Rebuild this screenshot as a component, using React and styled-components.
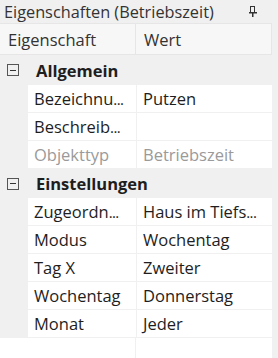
import styled, { createGlobalStyle } from "styled-components";

const Global = createGlobalStyle`
  body {
    margin: 0;
    font-family: "Open Sans", "Noto Sans", sans-serif;
    background: #f0f0f0;
  }
`;

const Panel = styled.div`
  width: 278px;
  height: 358px;
  display: flex;
  flex-direction: column;
  background: #f0f0f0;
  color: #1e1e1e;
  overflow: hidden;
`;

const TitleBar = styled.div`
  height: 23px;
  display: flex;
  align-items: center;
  justify-content: space-between;
  padding: 0 20px 0 4px;
  font-size: 16.3px;
  color: #333;
  white-space: nowrap;
`;

const Grid = styled.div`
  flex: 1;
  margin-right: 6px;
  background: #fff;
  display: flex;
  flex-direction: column;
`;

const HeaderRow = styled.div`
  display: grid;
  grid-template-columns: 136px 1fr;
  height: 32px;
  font-size: 16.5px;
`;

const HeaderCell = styled.div`
  display: flex;
  align-items: center;
  padding-left: 8px;
  background: #f7f7f7;
  border-top: 1px solid #e6e6e6;
  border-bottom: 1px solid #e6e6e6;
  border-right: 1px solid #e6e6e6;
  color: #333;
`;

const GroupRow = styled.div`
  height: ${(p) => p.$h}px;
  display: flex;
  align-items: center;
  background: #f0f0f0;
  font-size: 16.5px;
  font-weight: 700;
`;

const Toggle = styled.span`
  width: 10px;
  height: 10px;
  border: 1px solid #555;
  margin: 0 17px 0 7px;
  display: flex;
  align-items: center;
  justify-content: center;
  &::after {
    content: "";
    width: 6px;
    height: 1px;
    background: #333;
  }
`;

const Row = styled.div`
  display: grid;
  grid-template-columns: 28px 108px 1fr;
  height: 28px;
  font-size: 16.5px;
  color: ${(p) => (p.$readonly ? "#9a9a9a" : "#1e1e1e")};
`;

const Gutter = styled.div`
  background: #f0f0f0;
`;

const Cell = styled.div`
  display: flex;
  align-items: center;
  padding-left: 6px;
  white-space: nowrap;
  overflow: hidden;
  border-bottom: 1px solid #f0f0f0;
  border-left: ${(p) => (p.$value ? "1px solid #f0f0f0" : "none")};
`;

const Dots = styled.span`
  letter-spacing: -0.6px;
  font-size: 15px;
`;

const Filler = styled.div`
  flex: 1;
  display: grid;
  grid-template-columns: 136px 1fr;
  & > div:first-child {
    border-right: 1px solid #f0f0f0;
  }
`;

const Pin = () => (
  <svg width="10" height="12" viewBox="0 0 10 12">
    <rect x="2.5" y="0.5" width="4" height="6" fill="none" stroke="#333" />
    <rect x="1" y="6" width="8" height="1.5" fill="#333" />
    <rect x="4" y="7" width="1.5" height="4" fill="#333" />
  </svg>
);

const Text = ({ t }) =>
  t.endsWith("...") ? (
    <>
      {t.slice(0, -3)}
      <Dots>...</Dots>
    </>
  ) : (
    t
  );

const groups = [
  {
    name: "Allgemein",
    h: 30,
    rows: [
      ["Bezeichnu...", "Putzen"],
      ["Beschreib...", ""],
      ["Objekttyp", "Betriebszeit", true],
    ],
  },
  {
    name: "Einstellungen",
    h: 29,
    rows: [
      ["Zugeordn...", "Haus im Tiefs..."],
      ["Modus", "Wochentag"],
      ["Tag X", "Zweiter"],
      ["Wochentag", "Donnerstag"],
      ["Monat", "Jeder"],
    ],
  },
];

export default function App() {
  return (
    <Panel>
      <Global />
      <TitleBar>
        <span>Eigenschaften (Betriebszeit)</span>
        <Pin />
      </TitleBar>
      <Grid>
        <HeaderRow>
          <HeaderCell>Eigenschaft</HeaderCell>
          <HeaderCell>Wert</HeaderCell>
        </HeaderRow>
        {groups.map((g) => (
          <div key={g.name}>
            <GroupRow $h={g.h}>
              <Toggle />
              {g.name}
            </GroupRow>
            {g.rows.map(([k, v, ro]) => (
              <Row key={k} $readonly={ro}>
                <Gutter />
                <Cell>
                  <Text t={k} />
                </Cell>
                <Cell $value>
                  <Text t={v} />
                </Cell>
              </Row>
            ))}
          </div>
        ))}
        <Filler>
          <div />
          <div />
        </Filler>
      </Grid>
    </Panel>
  );
}
